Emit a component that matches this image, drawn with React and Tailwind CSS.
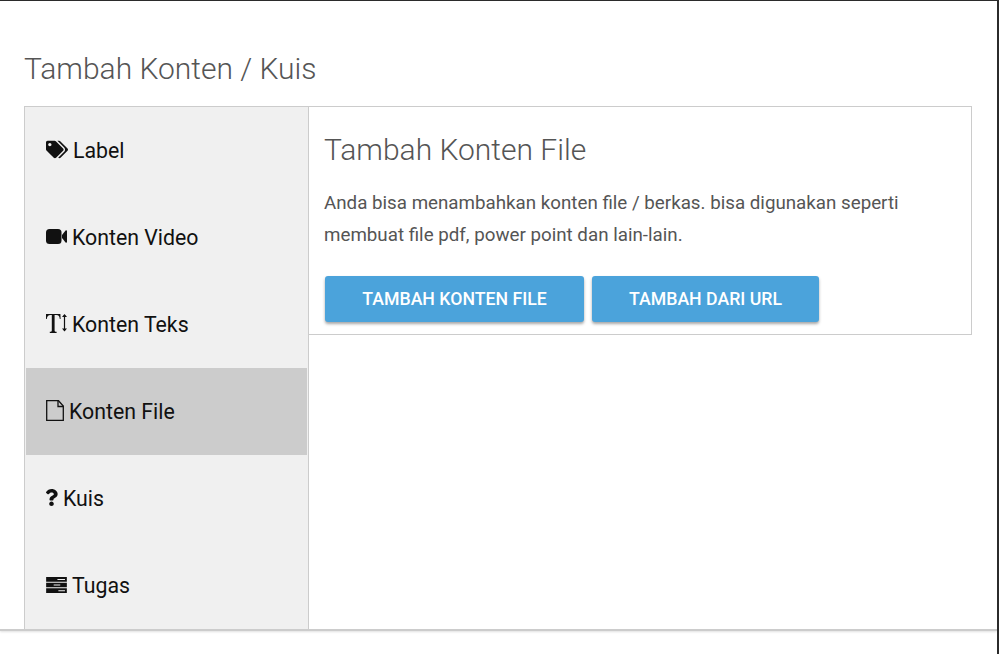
import React from "react";
import { FaTags, FaQuestion } from "react-icons/fa";

function VideoIcon({ className }) {
  return (
    <svg className={className} viewBox="0 0 21 15" fill="currentColor" xmlns="http://www.w3.org/2000/svg">
      <rect x="0" y="0" width="15.500" height="15" rx="3.5" />
      <path d="M16 6 19.600 1.600c.5-.5 1.400-.2 1.400.5v10.800c0 .7-.9 1-1.400.5L16 9z" />
    </svg>
  );
}

function TextHeightIcon({ className }) {
  return (
    <svg className={className} viewBox="0 0 21 19" xmlns="http://www.w3.org/2000/svg">
      <path
        fill="currentColor"
        d="M0 0h14.400l.2 5h-.8c-.3-2.600-1-3.900-3.400-3.900H8.600v15.400c0 .9.4 1.200 2 1.300v1.200H3.800V17.800c1.600-.1 2-.4 2-1.300V1.100H4.600C2.200 1.100 1.100 2.400.8 5H0z"
      />
      <path fill="none" stroke="currentColor" strokeWidth="1.2" d="M18.500 1v15.500" />
      <path fill="currentColor" d="M18.500 0 21 3h-5zM18.500 17.500 16 14.500h5z" />
    </svg>
  );
}

function FileIcon({ className }) {
  return (
    <svg className={className} viewBox="0 0 18 21" fill="none" stroke="currentColor" strokeWidth="1.3" xmlns="http://www.w3.org/2000/svg">
      <path d="M.7.7h11.800l4.800 5.300v14.300H.7z" />
      <path d="M12 .7v5.800h5.300" />
    </svg>
  );
}

function TasksIcon({ className }) {
  return (
    <svg className={className} viewBox="0 0 22 17" fill="currentColor" xmlns="http://www.w3.org/2000/svg">
      <path fillRule="evenodd" d="M0 0h22v5H0zM12 2v1.200h8V2zM0 6h22v5H0zM8 7.900v1.200h7V7.900zM0 12h22v5H0zM13 14v1.200h7V14z" />
    </svg>
  );
}

const menu = [
  { label: "Label", icon: <FaTags className="w-[22px] h-[19px]" /> },
  { label: "Konten Video", icon: <VideoIcon className="w-[21px] h-[15px]" /> },
  { label: "Konten Teks", icon: <TextHeightIcon className="w-[21px] h-[19px]" /> },
  { label: "Konten File", icon: <FileIcon className="w-[18px] h-[21px]" />, active: true },
  { label: "Kuis", icon: <FaQuestion className="w-[13px] h-[17px]" />, pad: "pl-[19px]" },
  { label: "Tugas", icon: <TasksIcon className="w-[21px] h-4" /> },
];

export default function App() {
  return (
    <div className="h-[654px] w-[999px] overflow-hidden bg-white flex font-['Roboto',sans-serif]">
      <div className="w-[997px] h-[631px] border-t border-[#2b2b2b] border-b-2 border-b-[#cccccc] shadow-[0_1px_2px_rgba(0,0,0,0.12)]">
        <h1 className="pl-6 pt-[46px] h-[105px] text-[30px] leading-[44px] font-light text-[#555555]">
          Tambah Konten / Kuis
        </h1>
        <div className="flex ml-6 w-[948px] items-start">
          <div className="w-[285px] h-[524px] shrink-0 bg-[#f0f0f0] border border-[#cccccc]">
            {menu.map((item) => (
              <div
                key={item.label}
                className={`mx-px h-[87px] flex items-center text-[21.3px] text-[#111111] ${item.pad || "pl-5"} ${item.active ? "bg-[#cccccc]" : ""}`}
              >
                <span className="flex items-center mr-[5px] -mt-0.5">{item.icon}</span>
                {item.label}
              </div>
            ))}
          </div>
          <div className="flex-1 -ml-px h-[229px] border border-[#cccccc] bg-white pl-[15px] pt-[21px]">
            <h2 className="text-[30px] leading-[44px] font-light text-[#555555]">Tambah Konten File</h2>
            <p className="mt-[15px] text-[18.75px] leading-8 text-[#555555]">
              Anda bisa menambahkan konten file / berkas. bisa digunakan seperti
              <br />
              membuat file pdf, power point dan lain-lain.
            </p>
            <div className="flex gap-2 mt-[25px] ml-px">
              <button className="h-[46px] w-[259px] rounded-[3px] bg-[#4ba3db] text-white text-[17.7px] font-medium shadow-[0_2px_3px_rgba(0,0,0,0.35)]">
                TAMBAH KONTEN FILE
              </button>
              <button className="h-[46px] w-[227px] rounded-[3px] bg-[#4ba3db] text-white text-[17.7px] font-medium shadow-[0_2px_3px_rgba(0,0,0,0.35)]">
                TAMBAH DARI URL
              </button>
            </div>
          </div>
        </div>
      </div>
      <div className="w-[2px] h-full bg-[#2b2b2b]" />
    </div>
  );
}
